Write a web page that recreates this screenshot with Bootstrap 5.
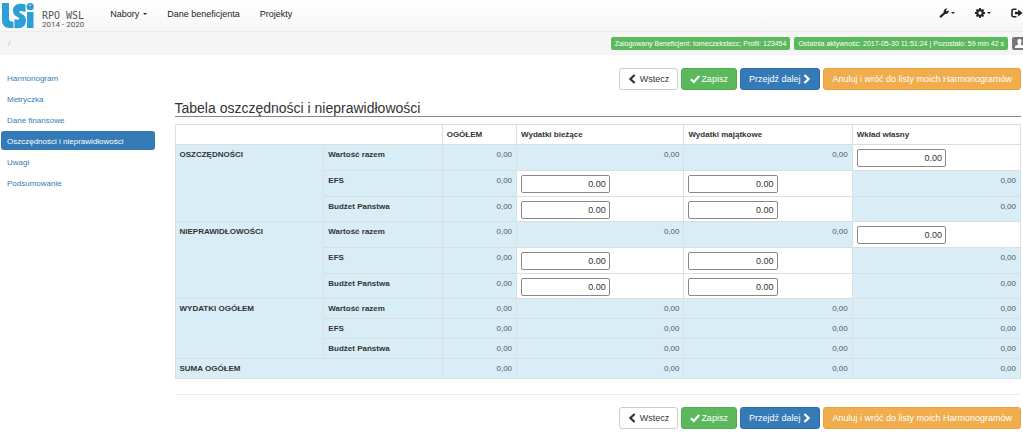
<!DOCTYPE html>
<html lang="pl">
<head>
<meta charset="utf-8">
<meta name="viewport" content="width=device-width, initial-scale=1">
<title>LSI RPO WSL 2014 - 2020</title>
<link href="https://cdn.jsdelivr.net/npm/bootstrap@5.3.0/dist/css/bootstrap.min.css" rel="stylesheet">
<style>
  body { font-family: "Liberation Sans", Arial, sans-serif; font-size: 8px; line-height: 12px; color: #333; }
  a { text-decoration: none; }
  .topbar { height: 32px; background: linear-gradient(#fff, #f6f6f6); border-bottom: 1px solid #ececec; }
  .brand-text { font: 10px/10px "DejaVu Sans Mono", monospace; color: #555; }
  .brand-years { font: 8px/8px Roboto, sans-serif; color: #555; }
  .main-links { font-size: 9px; gap: 20px; margin-left: 26px; padding-bottom: 4px; }
  .main-links a, .tool-links a { color: #222; }
  .tool-links { gap: 20px; padding-bottom: 4px; }
  .tri { display: inline-block; border: 2px solid transparent; border-top-color: #222; border-bottom: 0; vertical-align: middle; }
  .crumbs { height: 23px; background: #f5f5f5; color: #bbb; gap: 4px; }
  .status { background: #5cb85c; color: #fff; border-radius: 2px; padding: 0 4px; font-size: 7px; height: 13px; line-height: 13px; white-space: nowrap; }
  .status-user { background: #777; padding: 2px 3px; width: 11px; border-radius: 2px 0 0 2px; }
  .side { padding: 13px 16px 0 1px; }
  .side .nav-link { color: #337ab7; padding: 5px 6px 3px; line-height: 11px; border-radius: 3px; margin-bottom: 2px; }
  .side .nav-link.active { background: #337ab7; color: #fff; }
  .main { padding: 13px 2px 0 4px; }
  .actions { gap: 3px; }
  .actions .btn { font-size: 9px; line-height: 12px; padding: 4px 8px; border-radius: 3px; display: inline-flex; align-items: center; gap: 3px; white-space: nowrap; }
  .actions .btn-back { background: #fff; border-color: #ccc; color: #333; gap: 4px; }
  .actions .btn-save { background: #5cb85c; border-color: #4cae4c; color: #fff; gap: 1px; }
  .btn-next { background: #337ab7; border-color: #2e6da4; color: #fff; }
  .btn-cancel { background: #f0ad4e; border-color: #eea236; color: #fff; }
  h1 { font-size: 14px; line-height: 16px; margin: 10px 0 7px; border-bottom: 1px solid #888; color: #333; font-weight: 400; }
  .sums { table-layout: fixed; margin: 0; color: #333; border-color: #ddd; }
  .sums > :not(caption) > * > * { padding: 4px; line-height: 11px; height: 20px; vertical-align: top; background: #fff; color: #333; box-shadow: none; border-color: #e0e0e0; }
  .sums > tbody > tr > * { background: #d9edf7; border-color: #d3e1e8; }
  .sums > tbody > tr > td { text-align: right; color: #4b5a62; }
  .sums > tbody > tr > td.entry { background: #fff; text-align: left; border-color: #e0e0e0; padding-bottom: 3px; }
  .sums > tbody > tr:last-child > td.entry { padding-bottom: 2px; }
  .sums .form-control { font-size: 9px; line-height: 12px; padding: 2px 3px; width: 56%; min-height: 0; height: 18px; text-align: right; border: 1px solid #888; border-radius: 2px; color: #333; }
  .divider { border-top: 1px solid #eee; margin: 15px 0 12px; opacity: 1; }
</style>
</head>
<body>
<svg class="d-none" aria-hidden="true">
  <symbol id="left" viewBox="0 0 8 10"><path d="M6.600 1 2.400 5l4.200 4" fill="none" stroke="currentColor" stroke-width="2.200"/></symbol>
  <symbol id="right" viewBox="0 0 8 10"><path d="M1.400 1 5.600 5 1.400 9" fill="none" stroke="currentColor" stroke-width="2.200"/></symbol>
  <symbol id="check" viewBox="0 0 10 10"><path d="M.9 5.200 3.800 8 9.200 1.900" fill="none" stroke="currentColor" stroke-width="2.200"/></symbol>
</svg>

<header class="topbar d-flex align-items-center">
  <a href="#" class="d-flex align-items-center">
    <svg width="34" height="27" viewBox="0 0 34 27" role="img" aria-label="LSI">
      <g fill="#2b9fd6">
        <path d="M2 1h7v15.500c0 2 1 3 3.200 3l1.300.3V26H9.500C4.500 26 2 22.500 2 18z"/>
        <path d="M25.500 2.500C18 .5 13 3.500 13 8.500c0 4 2.500 5.500 5.500 7 1.500.8 1 2.500-1 2.300l-3-.5V26c7 1 11.500-1.500 11.500-7.500 0-4-2.500-6-5.500-7.300-2-1-.8-2.700 1-2.200l4 1z"/>
        <path d="M27 10h6.500v16H27z"/><circle cx="30.200" cy="4.700" r="3.600"/>
      </g>
      <path d="M29 4a2 2 0 0 1 2-1" stroke="#fff" stroke-width=".8" fill="none"/>
    </svg>
    <span class="d-flex flex-column ms-1 pt-2">
      <span class="brand-text ps-1">RPO WSL</span><span class="brand-years ps-1">2014 - 2020</span>
    </span>
  </a>
  <nav class="main-links d-flex" aria-label="Menu">
    <a href="#">Nabory<span class="tri ms-1"></span></a>
    <a href="#">Dane beneficjenta</a>
    <a href="#">Projekty</a>
  </nav>
  <nav class="tool-links d-flex align-items-center ms-auto" aria-label="Konto">
    <a href="#" aria-label="Narzędzia"><svg width="10" height="10" viewBox="0 0 10 10"><path d="M.7 8 4.700 4.500C4.300 2.200 6 .3 8.300.6L6.900 2.200l.7 1.100L9.700 2.500C10 4.800 8 6.300 6.200 5.900L2.300 9.500C1.200 10 .2 9 .7 8z" fill="currentColor"/></svg> <span class="tri"></span></a>
    <a href="#" aria-label="Ustawienia"><svg width="10" height="10" viewBox="0 0 10 10"><circle cx="5" cy="5" r="2.700" fill="none" stroke="currentColor" stroke-width="2"/><path d="M5 0v2M5 8v2M0 5h2M8 5h2M1.500 1.500l1.300 1.300M7.200 7.200l1.300 1.300M8.500 1.500 7.200 2.800M2.800 7.200 1.500 8.500" stroke="currentColor" stroke-width="1.900"/></svg> <span class="tri"></span></a>
    <a href="#" aria-label="Wyloguj"><svg width="12" height="10" viewBox="0 0 12 10"><path d="M5.500 1.200H2.500Q1 1.200 1 2.700v4.600q0 1.500 1.500 1.500h3" fill="none" stroke="currentColor" stroke-width="1.600"/><path d="M4 3.800h3.200V1.500L11.500 5 7.200 8.500V6.200H4z" fill="currentColor"/></svg></a>
  </nav>
</header>

<div class="crumbs d-flex align-items-center">
  <span class="ms-1 ps-1 me-auto">/</span>
  <span class="status">Zalogowany Beneficjent: tomeczekstecc; Profil: 123454</span>
  <span class="status">Ostatnia aktywność: 2017-05-30 11:51:24 | Pozostało: 59 min 42 s</span>
  <span class="status status-user d-flex overflow-hidden"><svg class="flex-shrink-0" width="9" height="9" viewBox="0 0 9 9" role="img" aria-label="Profil"><path d="M4.500 0C6.300 0 6.700 1.300 6.500 2.800 6.300 4 5.700 4.500 5.700 5.500L9 7v2H0V7l3.300-1.500c0-1-.6-1.500-.8-2.700C2.300 1.300 2.700 0 4.500 0z" fill="#fff"/></svg></span>
</div>

<div class="container-fluid px-0">
  <div class="row g-0">
    <nav class="side nav flex-column flex-nowrap col-2" aria-label="Sekcje">
      <a class="nav-link" href="#">Harmonogram</a>
      <a class="nav-link" href="#">Metryczka</a>
      <a class="nav-link" href="#">Dane finansowe</a>
      <a class="nav-link active" aria-current="page" href="#">Oszczędności i nieprawidłowości</a>
      <a class="nav-link" href="#">Uwagi</a>
      <a class="nav-link" href="#">Podsumowanie</a>
    </nav>
    <main class="main col-10">
      <div class="actions d-flex justify-content-end">
        <button type="button" class="btn btn-back"><svg width="8" height="10"><use href="#left"/></svg>Wstecz</button>
        <button type="button" class="btn btn-save"><svg width="10" height="10"><use href="#check"/></svg>Zapisz</button>
        <button type="button" class="btn btn-next">Przejdź dalej<svg width="8" height="10"><use href="#right"/></svg></button>
        <button type="button" class="btn btn-cancel">Anuluj i wróć do listy moich Harmonogramów</button>
      </div>
      <h1>Tabela oszczędności i nieprawidłowości</h1>
      <table class="sums table table-bordered">
        <colgroup><col style="width:17.6%"><col style="width:14%"><col style="width:8.8%"><col style="width:19.8%"><col style="width:19.9%"><col style="width:19.9%"></colgroup>
        <thead><tr><td colspan="2"></td><th scope="col">OGÓŁEM</th><th scope="col">Wydatki bieżące</th><th scope="col">Wydatki majątkowe</th><th scope="col">Wkład własny</th></tr></thead>
        <tbody>
          <tr><th scope="rowgroup" rowspan="3">OSZCZĘDNOŚCI</th><th scope="row">Wartość razem</th><td>0,00</td><td>0,00</td><td>0,00</td><td class="entry"><input class="form-control" type="text" value="0.00" aria-label="Oszczędności, wartość razem, wkład własny"></td></tr>
          <tr><th scope="row">EFS</th><td>0,00</td><td class="entry"><input class="form-control" type="text" value="0.00" aria-label="Oszczędności, EFS, wydatki bieżące"></td><td class="entry"><input class="form-control" type="text" value="0.00" aria-label="Oszczędności, EFS, wydatki majątkowe"></td><td>0,00</td></tr>
          <tr><th scope="row">Budżet Państwa</th><td>0,00</td><td class="entry"><input class="form-control" type="text" value="0.00" aria-label="Oszczędności, Budżet Państwa, wydatki bieżące"></td><td class="entry"><input class="form-control" type="text" value="0.00" aria-label="Oszczędności, Budżet Państwa, wydatki majątkowe"></td><td>0,00</td></tr>
        </tbody>
        <tbody>
          <tr><th scope="rowgroup" rowspan="3">NIEPRAWIDŁOWOŚCI</th><th scope="row">Wartość razem</th><td>0,00</td><td>0,00</td><td>0,00</td><td class="entry"><input class="form-control" type="text" value="0.00" aria-label="Nieprawidłowości, wartość razem, wkład własny"></td></tr>
          <tr><th scope="row">EFS</th><td>0,00</td><td class="entry"><input class="form-control" type="text" value="0.00" aria-label="Nieprawidłowości, EFS, wydatki bieżące"></td><td class="entry"><input class="form-control" type="text" value="0.00" aria-label="Nieprawidłowości, EFS, wydatki majątkowe"></td><td>0,00</td></tr>
          <tr><th scope="row">Budżet Państwa</th><td>0,00</td><td class="entry"><input class="form-control" type="text" value="0.00" aria-label="Nieprawidłowości, Budżet Państwa, wydatki bieżące"></td><td class="entry"><input class="form-control" type="text" value="0.00" aria-label="Nieprawidłowości, Budżet Państwa, wydatki majątkowe"></td><td>0,00</td></tr>
        </tbody>
        <tbody>
          <tr><th scope="rowgroup" rowspan="3">WYDATKI OGÓŁEM</th><th scope="row">Wartość razem</th><td>0,00</td><td>0,00</td><td>0,00</td><td>0,00</td></tr>
          <tr><th scope="row">EFS</th><td>0,00</td><td>0,00</td><td>0,00</td><td>0,00</td></tr>
          <tr><th scope="row">Budżet Państwa</th><td>0,00</td><td>0,00</td><td>0,00</td><td>0,00</td></tr>
          <tr><th scope="row" colspan="2">SUMA OGÓŁEM</th><td>0,00</td><td>0,00</td><td>0,00</td><td>0,00</td></tr>
        </tbody>
      </table>
      <hr class="divider">
      <div class="actions d-flex justify-content-end">
        <button type="button" class="btn btn-back"><svg width="8" height="10"><use href="#left"/></svg>Wstecz</button>
        <button type="button" class="btn btn-save"><svg width="10" height="10"><use href="#check"/></svg>Zapisz</button>
        <button type="button" class="btn btn-next">Przejdź dalej<svg width="8" height="10"><use href="#right"/></svg></button>
        <button type="button" class="btn btn-cancel">Anuluj i wróć do listy moich Harmonogramów</button>
      </div>
    </main>
  </div>
</div>
<script src="https://cdn.jsdelivr.net/npm/bootstrap@5.3.0/dist/js/bootstrap.bundle.min.js"></script>
</body>
</html>
